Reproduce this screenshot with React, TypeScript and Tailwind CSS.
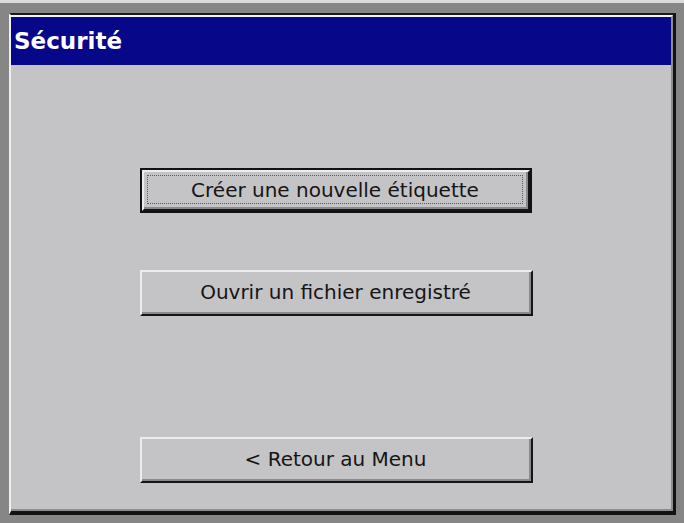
import type { ReactNode } from "react";

const FONT = "font-['DejaVu_Sans',Verdana,sans-serif]";

function ClassicButton({
  children,
  isDefault = false,
}: {
  children: ReactNode;
  isDefault?: boolean;
}) {
  return (
    <div
      className={
        isDefault
          ? "h-[45px] w-[392px] border-2 border-[#111]"
          : "h-[46px] w-[393px]"
      }
    >
      <div className="h-full w-full border-t-2 border-l-2 border-b-2 border-r-2 border-t-[#ececec] border-l-[#ececec] border-b-[#151515] border-r-[#151515]">
        <div className="flex h-full w-full items-center justify-center border-b-2 border-r-2 border-b-[#8a8a8a] border-r-[#8a8a8a] bg-[#c4c3c5] p-[3px]">
          <div
            className={
              isDefault
                ? "flex h-full w-full items-center justify-center border border-dotted border-[#5a5a5a]"
                : "flex h-full w-full items-center justify-center"
            }
          >
            <span className={`${FONT} text-[20px] leading-none text-[#151515]`}>
              {children}
            </span>
          </div>
        </div>
      </div>
    </div>
  );
}

export default function App() {
  return (
    <div className="h-[523px] w-[684px] overflow-hidden bg-[#868686]">
      <div className="h-[3px] w-full bg-[#dadada]" />
      {/* window */}
      <div className="ml-[9px] mt-[10px] flex h-[502px] w-[667px] flex-col border-t-2 border-l-2 border-r-[3px] border-b-[4px] border-t-[#1a1a1a] border-l-[#f0f0f0] border-r-[#121212] border-b-[#121212]">
        <div className="flex h-full flex-col border-t-2 border-r-2 border-b-2 border-t-[#f2f2f2] border-r-[#8c8c8c] border-b-[#8c8c8c] bg-[#c4c3c5]">
          {/* title bar */}
          <div className="flex h-[48px] shrink-0 items-center bg-[#07078a] pl-[3px]">
            <span className={`${FONT} text-[23px] font-bold leading-none text-white`}>
              Sécurité
            </span>
          </div>
          {/* body */}
          <div className="flex flex-1 flex-col pl-[129px] pt-[103px]">
            <ClassicButton isDefault>Créer une nouvelle étiquette</ClassicButton>
            <div className="mt-[57px]">
              <ClassicButton>Ouvrir un fichier enregistré</ClassicButton>
            </div>
            <div className="mt-[121px]">
              <ClassicButton>&lt; Retour au Menu</ClassicButton>
            </div>
          </div>
        </div>
      </div>
    </div>
  );
}
